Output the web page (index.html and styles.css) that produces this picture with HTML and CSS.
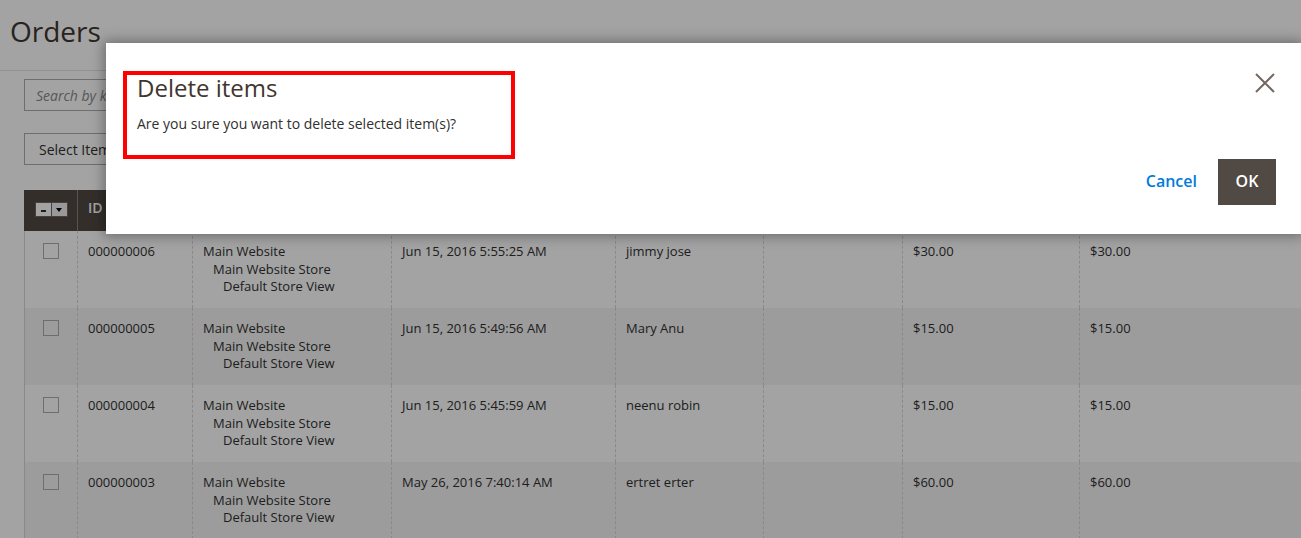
FILE: index.html
```html
<!DOCTYPE html>
<html lang="en">
<head>
<meta charset="utf-8">
<title>Orders</title>
<link rel="stylesheet" href="styles.css">
</head>
<body>
<div class="page">
  <header class="page-header">
    <h1 class="page-title">Orders</h1>
  </header>

  <div class="toolbar">
    <div class="search-row">
      <input class="search" type="text" placeholder="Search by keyword">
    </div>
    <div class="actions-row">
      <button class="action-select" type="button">Select Items</button>
    </div>
  </div>

  <table class="grid">
    <colgroup>
      <col class="c-check"><col class="c-id"><col class="c-store"><col class="c-date">
      <col class="c-name"><col class="c-ship"><col class="c-base"><col class="c-paid">
    </colgroup>
    <thead>
      <tr>
        <th class="th-check">
          <span class="multi"><span class="multi-minus"><i></i></span><span class="multi-arrow"><i></i></span></span>
        </th>
        <th>ID</th>
        <th>Purchase Point</th>
        <th>Purchase Date</th>
        <th>Bill-to Name</th>
        <th>Ship-to Name</th>
        <th>Grand Total (Base)</th>
        <th>Grand Total (Purchased)</th>
      </tr>
    </thead>
    <tbody>
      <tr>
        <td class="td-check"><span class="box"></span></td>
        <td>000000006</td>
        <td><div>Main Website</div><div class="l2">Main Website Store</div><div class="l3">Default Store View</div></td>
        <td>Jun 15, 2016 5:55:25 AM</td>
        <td>jimmy jose</td>
        <td></td>
        <td>$30.00</td>
        <td>$30.00</td>
      </tr>
      <tr>
        <td class="td-check"><span class="box"></span></td>
        <td>000000005</td>
        <td><div>Main Website</div><div class="l2">Main Website Store</div><div class="l3">Default Store View</div></td>
        <td>Jun 15, 2016 5:49:56 AM</td>
        <td>Mary Anu</td>
        <td></td>
        <td>$15.00</td>
        <td>$15.00</td>
      </tr>
      <tr>
        <td class="td-check"><span class="box"></span></td>
        <td>000000004</td>
        <td><div>Main Website</div><div class="l2">Main Website Store</div><div class="l3">Default Store View</div></td>
        <td>Jun 15, 2016 5:45:59 AM</td>
        <td>neenu robin</td>
        <td></td>
        <td>$15.00</td>
        <td>$15.00</td>
      </tr>
      <tr>
        <td class="td-check"><span class="box"></span></td>
        <td>000000003</td>
        <td><div>Main Website</div><div class="l2">Main Website Store</div><div class="l3">Default Store View</div></td>
        <td>May 26, 2016 7:40:14 AM</td>
        <td>ertret erter</td>
        <td></td>
        <td>$60.00</td>
        <td>$60.00</td>
      </tr>
    </tbody>
  </table>
</div>

<div class="overlay"></div>

<div class="modal" role="dialog">
  <button class="modal-close" type="button" aria-label="Close">
    <svg width="20" height="20" viewBox="0 0 20 20"><path d="M1 1 L19 19 M19 1 L1 19" stroke="#736963" stroke-width="2" fill="none"/></svg>
  </button>
  <div class="modal-header">
    <h2 class="modal-title">Delete items</h2>
  </div>
  <div class="modal-content">Are you sure you want to delete selected item(s)?</div>
  <div class="modal-footer">
    <button class="btn-cancel" type="button">Cancel</button>
    <button class="btn-ok" type="button">OK</button>
  </div>
  <div class="highlight"></div>
</div>
</body>
</html>
```

FILE: styles.css
```css
html, body {
  margin: 0;
  padding: 0;
}
body {
  width: 1301px;
  height: 538px;
  overflow: hidden;
  position: relative;
  background: #ffffff;
  font-family: "Open Sans", "DejaVu Sans", sans-serif;
  color: #303030;
  font-size: 13px;
  line-height: 1.36;
}

.page {
  width: 1301px;
  overflow: hidden;
}

.page-header {
  height: 71px;
  box-sizing: border-box;
  padding: 12px 0 0 10px;
  border-bottom: 1px solid #e3e3e3;
}
.page-title {
  margin: 0;
  font-size: 28px;
  font-weight: 400;
  line-height: 1.36;
  color: #41362f;
}

.toolbar {
  padding: 8px 0 0 24px;
}
.search {
  display: block;
  width: 420px;
  height: 32px;
  box-sizing: border-box;
  border: 1px solid #adadad;
  padding: 0 11px;
  font-family: inherit;
  font-size: 14px;
  background: #fff;
  outline: none;
}
.search::placeholder {
  color: #8a8a8a;
  font-style: italic;
}
.actions-row {
  margin-top: 22px;
}
.action-select {
  display: block;
  width: 180px;
  height: 32px;
  box-sizing: border-box;
  border: 1px solid #adadad;
  background: #fff;
  padding: 0 14px;
  text-align: left;
  font-family: inherit;
  font-size: 14px;
  color: #303030;
}

.grid {
  margin: 25px 0 0 24px;
  border-collapse: collapse;
  table-layout: fixed;
  width: 1355px;
}
.c-check { width: 53px; }
.c-id { width: 115px; }
.c-store { width: 199px; }
.c-date { width: 224px; }
.c-name { width: 148px; }
.c-ship { width: 139px; }
.c-base { width: 177px; }
.c-paid { width: 300px; }

.grid th {
  height: 41px;
  box-sizing: border-box;
  background: #514943;
  color: #ffffff;
  font-size: 14px;
  font-weight: 600;
  text-align: left;
  vertical-align: top;
  padding: 8px 10px 0;
  border-left: 1px solid #8a837f;
  white-space: nowrap;
  overflow: hidden;
}
.grid th.th-check {
  border-left: 1px solid #514943;
  text-align: center;
  padding: 12px 0 0;
}
.multi {
  display: inline-flex;
  height: 15px;
  box-sizing: border-box;
  border: 1px solid #6e6661;
  vertical-align: top;
}
.multi-minus, .multi-arrow {
  width: 15px;
  display: flex;
  align-items: center;
  justify-content: center;
}
.multi-minus {
  background: #ffffff;
  border-right: 1px solid #6e6661;
}
.multi-minus i {
  display: block;
  width: 5px;
  height: 2px;
  margin-top: 2px;
  background: #303030;
}
.multi-arrow {
  background: #f0f0f0;
}
.multi-arrow i {
  display: block;
  width: 0;
  height: 0;
  border-left: 3px solid transparent;
  border-right: 3px solid transparent;
  border-top: 4px solid #000;
  margin-top: 1px;
}

.grid td {
  height: 77px;
  box-sizing: border-box;
  padding: 12px 10px 0;
  vertical-align: top;
  border-left: 1px dashed #d6d6d6;
  border-right: 1px dashed #d6d6d6;
  white-space: nowrap;
  font-size: 13px;
  line-height: 1.36;
  color: #303030;
}
.grid td.td-check {
  border-left: 1px solid #d6d6d6;
  text-align: center;
  padding: 12px 0 0;
}
.grid tbody tr:nth-child(odd) td { background: #ffffff; }
.grid tbody tr:nth-child(even) td { background: #f5f5f5; }
.box {
  display: inline-block;
  width: 16px;
  height: 16px;
  box-sizing: border-box;
  border: 1px solid #adadad;
  background: transparent;
  vertical-align: top;
}
.l2 { padding-left: 10px; }
.l3 { padding-left: 20px; }

.overlay {
  position: absolute;
  inset: 0;
  background: rgba(0, 0, 0, 0.36);
}

.modal {
  position: absolute;
  left: 106px;
  right: 0;
  top: 43px;
  box-sizing: border-box;
  background: #ffffff;
  box-shadow: 0 0 12px 2px rgba(0, 0, 0, 0.35);
  padding: 29px 25px 29px 31px;
}
.modal-title {
  margin: 0;
  font-size: 24px;
  font-weight: 400;
  line-height: 1.36;
  color: #41362f;
}
.modal-content {
  margin-top: 9px;
  font-size: 14px;
  line-height: 1.36;
  color: #303030;
}
.modal-footer {
  margin-top: 26px;
  display: flex;
  justify-content: flex-end;
  align-items: center;
  gap: 21px;
}
.btn-cancel {
  border: 0;
  background: none;
  padding: 1px 0 0;
  font-family: inherit;
  font-size: 16px;
  font-weight: 600;
  line-height: 1.36;
  color: #007bdb;
}
.btn-ok {
  width: 58px;
  height: 46px;
  border: 0;
  padding: 1px 0 0;
  background: #514943;
  color: #ffffff;
  font-family: inherit;
  font-size: 16px;
  font-weight: 600;
  line-height: 1.36;
}
.modal-close {
  position: absolute;
  top: 30px;
  right: 26px;
  width: 20px;
  height: 20px;
  padding: 0;
  border: 0;
  background: none;
}
.modal-close svg { display: block; }
.highlight {
  position: absolute;
  left: 17px;
  top: 28px;
  width: 392px;
  height: 88px;
  box-sizing: border-box;
  border: 4px solid #ff0000;
  pointer-events: none;
}
```
